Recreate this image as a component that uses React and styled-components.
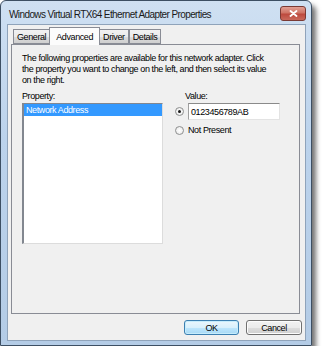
import React from 'react';
import styled, { createGlobalStyle } from 'styled-components';

const GlobalStyle = createGlobalStyle`
  html, body {
    margin: 0;
    padding: 0;
    background: #ffffff;
  }
  body {
    font-family: "Liberation Sans", Arial, sans-serif;
    font-size: 9px;
    letter-spacing: -0.4px;
    color: #000;
  }
`

export default function App() {
  return (
    <>
      <GlobalStyle />
      <Window>
        <TitleBar>
          <Title>Windows Virtual RTX64 Ethernet Adapter Properties</Title>
          <CloseButton>
            <svg width="9" height="7" viewBox="0 0 9 7">
              <path d="M1.5 1 L7.5 6 M7.5 1 L1.5 6" stroke="#fff" strokeWidth="1.8" strokeLinecap="round" />
            </svg>
          </CloseButton>
        </TitleBar>
        <Client>
          <TabStrip>
            <Tab>General</Tab>
            <Tab active>Advanced</Tab>
            <Tab>Driver</Tab>
            <Tab>Details</Tab>
          </TabStrip>
          <Panel>
            <Description>
              The following properties are available for this network adapter. Click<br />
              the property you want to change on the left, and then select its value<br />
              on the right.
            </Description>
            <Columns>
              <PropertyColumn>
                <Label>Property:</Label>
                <ListBox>
                  <ListItem selected>Network Address</ListItem>
                </ListBox>
              </PropertyColumn>
              <ValueColumn>
                <ValueLabel>Value:</ValueLabel>
                <OptionRow>
                  <Radio checked />
                  <TextBox>0123456789AB</TextBox>
                </OptionRow>
                <OptionRow>
                  <Radio />
                  <OptionText>Not Present</OptionText>
                </OptionRow>
              </ValueColumn>
            </Columns>
          </Panel>
          <ButtonRow>
            <Button primary>OK</Button>
            <Button>Cancel</Button>
          </ButtonRow>
        </Client>
      </Window>
    </>
  )
}

const Window = styled.div`
  box-sizing: border-box;
  width: 312px;
  height: 346px;
  display: flex;
  flex-direction: column;
  padding: 0 5px 4px 6px;
  border: 1px solid #3d4f63;
  border-radius: 6px 6px 0 0;
  background: linear-gradient(180deg, #cfe0f2 0%, #bcd3ec 40%, #b4cce6 100%);
  box-shadow: 4px 5px 5px rgba(0, 0, 0, 0.55);
`

const TitleBar = styled.div`
  height: 23px;
  display: flex;
  align-items: center;
  justify-content: space-between;
  padding-left: 2px;
`

const Title = styled.div`
  font-size: 10px;
  letter-spacing: -0.6px;
  color: #1a1a1a;
  margin-top: 3px;
`

const CloseButton = styled.div`
  width: 24px;
  height: 13px;
  margin-top: 1px;
  display: flex;
  align-items: center;
  justify-content: center;
  border: 1px solid #7a3a34;
  border-radius: 3px;
  background: linear-gradient(180deg, #e2a094 0%, #cf7465 45%, #bd4a3e 55%, #c9695b 100%);
`

const Client = styled.div`
  flex: 1;
  display: flex;
  flex-direction: column;
  background: #f0f0f0;
  border: 1px solid #8fa3ba;
  padding: 2px 5px 5px 3px;
`

const TabStrip = styled.div`
  display: flex;
  align-items: flex-end;
  padding-left: 2px;
  height: 18px;
  position: relative;
  z-index: 1;
  margin-bottom: -1px;
`

const Tab = styled.div`
  box-sizing: border-box;
  height: ${p => (p.active ? '18px' : '15px')};
  padding: 0 ${p => (p.active ? '6px' : '3px')};
  margin: 0 ${p => (p.active ? '-1px' : '0')};
  margin-bottom: ${p => (p.active ? '0' : '1px')};
  padding-top: ${p => (p.active ? '0' : '1px')};
  display: flex;
  align-items: center;
  border: 1px solid #898c95;
  border-bottom: ${p => (p.active ? 'none' : '1px solid #898c95')};
  background: ${p => (p.active ? '#fcfcfc' : 'linear-gradient(180deg, #f2f2f2 0%, #ebebeb 50%, #dddddd 51%, #cfcfcf 100%)')};
  position: relative;
  z-index: ${p => (p.active ? 2 : 1)};
  & + & {
    border-left: ${p => (p.active ? '1px solid #898c95' : 'none')};
  }
`

const Panel = styled.div`
  flex: 1;
  border: 1px solid #898c95;
  background: #f0f0f0;
  padding: 8px 10px;
`

const Description = styled.div`
  line-height: 11px;
  white-space: nowrap;
`

const Columns = styled.div`
  display: flex;
  margin-top: 4px;
`

const PropertyColumn = styled.div`
  display: flex;
  flex-direction: column;
  width: 141px;
`

const Label = styled.div`
  line-height: 12px;
  margin-bottom: 1px;
`

const ListBox = styled.div`
  box-sizing: border-box;
  height: 141px;
  background: #fff;
  border: 1px solid #dcdcdc;
  border-top-color: #828790;
  border-left: 2px solid #828790;
`

const ListItem = styled.div`
  height: 12px;
  line-height: 12px;
  padding-left: 2px;
  background: ${p => (p.selected ? '#3399ff' : 'transparent')};
  color: ${p => (p.selected ? '#ffffff' : '#000')};
`

const ValueColumn = styled.div`
  display: flex;
  flex-direction: column;
  margin-left: 12px;
`

const ValueLabel = styled.div`
  line-height: 12px;
  margin-left: 10px;
  margin-bottom: 1px;
`

const OptionRow = styled.div`
  display: flex;
  align-items: center;
  gap: 4px;
  margin-bottom: 5px;
`

const Radio = styled.span`
  box-sizing: border-box;
  width: 9px;
  height: 9px;
  border-radius: 50%;
  border: 1px solid #8e8f8f;
  background: radial-gradient(circle, #ffffff 0%, #e6e6e6 100%);
  display: flex;
  align-items: center;
  justify-content: center;
  &::after {
    content: '';
    width: 3px;
    height: 3px;
    border-radius: 50%;
    background: ${p => (p.checked ? '#1a1a1a' : 'transparent')};
  }
`

const TextBox = styled.div`
  box-sizing: border-box;
  width: 92px;
  height: 17px;
  background: #fff;
  border: 1px solid #e3e3e3;
  border-top-color: #8a8a8a;
  border-left-color: #a0a0a0;
  display: flex;
  align-items: center;
  padding-left: 2px;
`

const OptionText = styled.span`
  margin-left: 0;
`

const ButtonRow = styled.div`
  display: flex;
  justify-content: flex-end;
  gap: 7px;
  margin-top: 6px;
  margin-right: -2px;
`

const Button = styled.div`
  box-sizing: border-box;
  width: ${p => (p.primary ? '55px' : '56px')};
  height: 15px;
  display: flex;
  align-items: center;
  justify-content: center;
  border-radius: 3px;
  border: 1px solid ${p => (p.primary ? '#3c7fb1' : '#707070')};
  background: ${p => (p.primary
    ? 'linear-gradient(180deg, #eaf6fd 0%, #d9f0fc 50%, #bee6fd 51%, #a7d9f5 100%)'
    : 'linear-gradient(180deg, #f2f2f2 0%, #ebebeb 50%, #dddddd 51%, #cfcfcf 100%)')};
  box-shadow: inset 0 0 0 1px ${p => (p.primary ? '#c5ecfc' : '#fcfcfc')};
`
